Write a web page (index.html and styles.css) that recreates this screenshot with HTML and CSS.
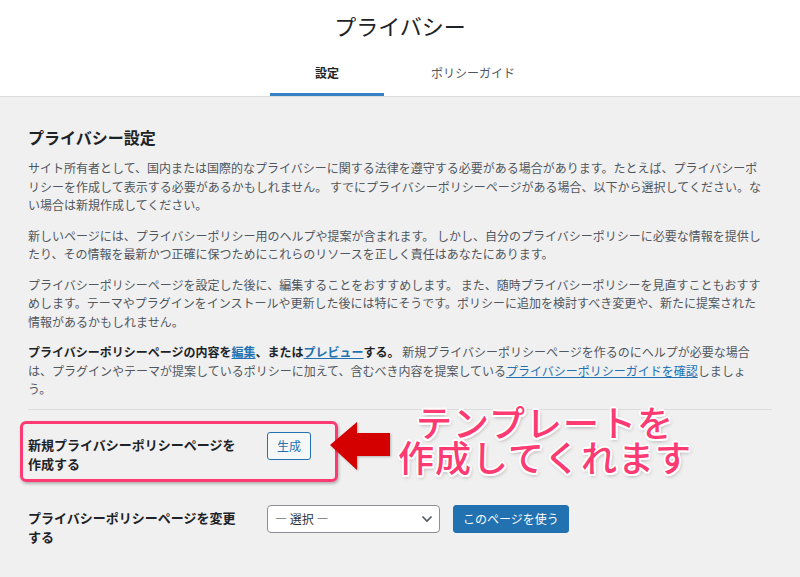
FILE: index.html
```html
<!DOCTYPE html>
<html lang="ja">
  <head>
    <meta charset="UTF-8">
    <meta name="viewport" content="width=device-width, initial-scale=1.0">
    <title>プライバシー設定</title>
    <link rel="stylesheet" href="styles.css">
  </head>
  <body>
    <div class="privacy-header">
      <h1 class="privacy-title">プライバシー</h1>
      <nav class="privacy-tabs">
        <a href="#" class="privacy-tab active">設定</a>
        <a href="#" class="privacy-tab">ポリシーガイド</a>
      </nav>
    </div>

    <div class="privacy-body">
      <h2>プライバシー設定</h2>
      <p>サイト所有者として、国内または国際的なプライバシーに関する法律を遵守する必要がある場合があります。たとえば、プライバシーポリシーを作成して表示する必要があるかもしれません。 すでにプライバシーポリシーページがある場合、以下から選択してください。ない場合は新規作成してください。</p>
      <p>新しいページには、プライバシーポリシー用のヘルプや提案が含まれます。 しかし、自分のプライバシーポリシーに必要な情報を提供したり、その情報を最新かつ正確に保つためにこれらのリソースを正しく責任はあなたにあります。</p>
      <p>プライバシーポリシーページを設定した後に、編集することをおすすめします。 また、随時プライバシーポリシーを見直すこともおすすめします。テーマやプラグインをインストールや更新した後には特にそうです。ポリシーに追加を検討すべき変更や、新たに提案された情報があるかもしれません。</p>
      <p><strong>プライバシーポリシーページの内容を<a href="#">編集</a>、または<a href="#">プレビュー</a>する。</strong> 新規プライバシーポリシーページを作るのにヘルプが必要な場合は、プラグインやテーマが提案しているポリシーに加えて、含むべき内容を提案している<a href="#">プライバシーポリシーガイドを確認</a>しましょう。</p>
      <hr>

      <div class="form-row">
        <div class="row-label">新規プライバシーポリシーページを作成する</div>
        <div class="row-field">
          <button type="button" class="button">生成</button>
        </div>
      </div>

      <div class="form-row">
        <label class="row-label" for="page-select">プライバシーポリシーページを変更する</label>
        <div class="row-field">
          <div class="select-wrap">
            <select id="page-select">
              <option>— 選択 —</option>
            </select>
            <svg class="select-arrow" width="12" height="8" viewBox="0 0 12 8">
              <path d="M1.5 1.5 L6 6 L10.5 1.5" fill="none" stroke="#50575e" stroke-width="1.6"/>
            </svg>
          </div>
          <button type="button" class="button button-primary">このページを使う</button>
        </div>
      </div>
    </div>

    <!-- annotation layer -->
    <div class="callout-box"></div>
    <svg class="callout-arrow" width="66" height="56" viewBox="0 0 66 56">
      <polygon points="2,27 29,4 29,15 62,15 62,38 29,38 29,52" fill="#d40000"/>
    </svg>
    <div class="callout-text">テンプレートを<br>作成してくれます</div>
  </body>
</html>
```

FILE: styles.css
```css
:root {
  --page: #f0f0f1;
  --white: #fff;
  --text: #1d2327;
  --muted: #50575e;
  --border: #dcdcde;
  --blue: #2271b1;
  --tab-line: #3582c4;
  --pink: #fd3a72;
  --red: #d40000;
}

body {
  margin: 0;
  background-color: var(--page);
  font-family: "Noto Sans CJK JP", "Noto Sans", sans-serif;
  color: var(--text);
}

.privacy-header {
  background-color: var(--white);
  border-bottom: 1px solid var(--border);
  text-align: center;
}

.privacy-title {
  margin: 0;
  padding-top: 10px;
  font-size: 22px;
  line-height: 30px;
  font-weight: 400;
  color: var(--text);
}

.privacy-tabs {
  display: inline-grid;
  grid-template-columns: 1fr 1fr;
  margin-top: 15px;
}

.privacy-tab {
  display: block;
  width: 114px;
  margin: 0 16px;
  padding: 8px 0 14px;
  font-size: 12px;
  line-height: 19px;
  color: var(--muted);
  text-decoration: none;
}

.privacy-tab.active {
  color: var(--text);
  font-weight: 700;
  box-shadow: inset 0 -3px var(--tab-line);
}

.privacy-body {
  padding: 29px 34px 0 28px;
}

h2 {
  margin: 0 0 11px;
  font-size: 16px;
  line-height: 22px;
  font-weight: 700;
  color: var(--text);
}

p {
  margin: 0 0 12px;
  font-size: 12px;
  line-height: 18.5px;
  color: var(--muted);
}

p:last-of-type {
  margin-bottom: 0;
}

p strong {
  color: var(--text);
}

p a {
  color: var(--blue);
  text-decoration: underline;
}

hr {
  margin: 10px -6px 7px 0;
  border: none;
  border-top: 1px solid var(--border);
}

.form-row {
  display: grid;
  grid-template-columns: 239px 1fr;
  padding: 15px 0 17px;
}

.row-label {
  display: block;
  padding: 3px 27px 0 0;
  font-size: 13px;
  line-height: 19px;
  font-weight: 700;
  color: var(--text);
}

.row-field {
  display: flex;
  align-items: flex-start;
  gap: 13px;
}

.button {
  height: 28px;
  padding: 0 9px;
  border: 1px solid var(--blue);
  border-radius: 3px;
  background-color: #f6f7f7;
  color: var(--blue);
  font-family: inherit;
  font-size: 12px;
  line-height: 26px;
  cursor: pointer;
}

.button-primary {
  background-color: var(--blue);
  color: var(--white);
}

.select-wrap {
  position: relative;
}

.select-wrap select {
  width: 173px;
  height: 28px;
  padding: 0 24px 0 7px;
  border: 1px solid #8c8f94;
  border-radius: 4px;
  background-color: var(--white);
  color: #2c3338;
  font-family: inherit;
  font-size: 12px;
  appearance: none;
  -webkit-appearance: none;
}

.select-arrow {
  position: absolute;
  right: 7px;
  top: 10px;
  pointer-events: none;
}

/* annotation overlay */
.callout-box {
  position: absolute;
  left: 20px;
  top: 421px;
  width: 318px;
  height: 61px;
  box-sizing: border-box;
  border: 3px solid var(--pink);
  border-radius: 6px;
  box-shadow: 1px 2px 3px rgba(0, 0, 0, 0.25);
}

.callout-arrow {
  position: absolute;
  left: 328px;
  top: 418px;
  filter: drop-shadow(1px 1px 1px rgba(0, 0, 0, 0.25));
}

.callout-text {
  position: absolute;
  left: 395px;
  top: 404px;
  width: 300px;
  text-align: center;
  font-size: 36px;
  line-height: 35px;
  font-weight: 500;
  letter-spacing: 1px;
  color: var(--pink);
  white-space: nowrap;
  text-shadow:
    2px 0 #fff, -2px 0 #fff, 0 2px #fff, 0 -2px #fff,
    1.5px 1.5px #fff, -1.5px 1.5px #fff, 1.5px -1.5px #fff, -1.5px -1.5px #fff,
    1px 2px 4px rgba(0, 0, 0, 0.4);
}
```
